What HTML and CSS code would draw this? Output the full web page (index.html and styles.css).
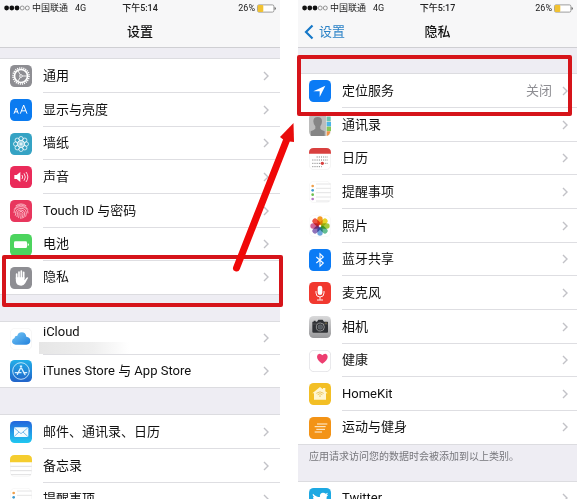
FILE: index.html
```
<!DOCTYPE html>
<html lang="zh-CN">
<head>
  <meta charset="UTF-8">
  <meta name="viewport" content="width=device-width, initial-scale=1.0">
  <title>设置 - 隐私</title>
  <link rel="stylesheet" href="styles.css">
</head>
<body>
  <!-- Shared icons -->
  <svg class="sprite">
    <symbol id="chevron" viewBox="0 0 6 10"><path d="M1 1l4 4-4 4" fill="none" stroke="#c2c2c7" stroke-width="1.4"/></symbol>
    <symbol id="signal" viewBox="0 0 26 6">
      <g fill="#111"><circle cx="2.6" cy="3" r="2.4"/><circle cx="7.8" cy="3" r="2.4"/><circle cx="13" cy="3" r="2.4"/></g>
      <g fill="none" stroke="#555" stroke-width=".6"><circle cx="18.2" cy="3" r="2"/><circle cx="23.3" cy="3" r="2"/></g>
    </symbol>
    <symbol id="battery" viewBox="0 0 19 9">
      <rect x=".5" y=".9" width="16.4" height="7.2" rx="1.5" fill="#fff" stroke="#777" stroke-width=".7"/>
      <rect x=".7" y="1.1" width="5.6" height="6.8" rx="1" fill="#f1c232"/>
      <path d="M17.6 3.1q1.2.3 1.2 1.4t-1.2 1.4z" fill="#555"/>
    </symbol>
    <symbol id="reminders" viewBox="0 0 66 66">
      <rect x="1" y="1" width="64" height="64" rx="14" fill="#fff" stroke="#eee" stroke-width="1.5"/>
      <path d="M21 9h44M21 22h44M21 35h44M21 48h44M21 60h40" stroke="#d6d6d8" stroke-width="2"/>
      <circle cx="11" cy="15" r="4" fill="#f0a04b"/><circle cx="11" cy="28" r="4" fill="#3f9bd0"/>
      <circle cx="11" cy="41" r="4" fill="#6cc04f"/><circle cx="11" cy="54" r="4" fill="#b57bc4"/>
    </symbol>
  </svg>

  <div class="stage">
    <section class="phone">
      <header class="top">
        <div class="status">
          <div class="carrier"><svg class="signal"><use href="#signal"/></svg><span>中国联通</span><span class="net">4G</span></div>
          <div class="time">下午5:14</div>
          <div class="power">26%<svg class="battery"><use href="#battery"/></svg></div>
        </div>
        <div class="nav"><h1>设置</h1></div>
      </header>

      <ul class="group first">
        <li><a class="row" href="#">
          <svg class="icon" viewBox="0 0 66 66"><rect width="66" height="66" rx="14" fill="#8e8e93"/>
            <g fill="none" stroke="#fff"><circle cx="33" cy="33" r="24" stroke-width="5" stroke-dasharray="3.4 2.88"/><circle cx="33" cy="33" r="19.5" stroke-width="5"/><circle cx="33" cy="33" r="4" stroke-width="2.5"/><path d="M37 33h14M31 29.500l-7-12M31 36.500l-7 12" stroke-width="2.5"/></g></svg>
          <span class="body"><span class="label">通用</span><svg class="chevron"><use href="#chevron"/></svg></span></a></li>
        <li><a class="row" href="#">
          <svg class="icon" viewBox="0 0 66 66"><rect width="66" height="66" rx="14" fill="#0b7bf0"/>
            <path d="M12 44l6.500-17 6.500 17M14.500 38.500h8M31 44l10-26 10 26M34.500 35.500h13" fill="none" stroke="#fff" stroke-width="3"/></svg>
          <span class="body"><span class="label">显示与亮度</span><svg class="chevron"><use href="#chevron"/></svg></span></a></li>
        <li><a class="row" href="#">
          <svg class="icon" viewBox="0 0 66 66"><rect width="66" height="66" rx="14" fill="#35a3c4"/>
            <g fill="none" stroke="#fff" stroke-width="2.2"><circle cx="33" cy="17" r="6.500"/><circle cx="44.300" cy="21.700" r="6.500"/><circle cx="49" cy="33" r="6.500"/><circle cx="44.300" cy="44.300" r="6.500"/><circle cx="33" cy="49" r="6.500"/><circle cx="21.700" cy="44.300" r="6.500"/><circle cx="17" cy="33" r="6.500"/><circle cx="21.700" cy="21.700" r="6.500"/><circle cx="33" cy="33" r="10"/><circle cx="33" cy="33" r="4"/><path d="M33 20v26M20 33h26M24 24l18 18M42 24L24 42" stroke-width="1.500"/></g></svg>
          <span class="body"><span class="label">墙纸</span><svg class="chevron"><use href="#chevron"/></svg></span></a></li>
        <li><a class="row" href="#">
          <svg class="icon" viewBox="0 0 66 66"><rect width="66" height="66" rx="14" fill="#ea2b5a"/>
            <path d="M13 27h7l11-9v30l-11-9h-7z" fill="#fff"/>
            <path d="M36 27q4 6 0 12M42 22q8 11 0 22M48 18q11 15 0 30" fill="none" stroke="#fff" stroke-width="2.500"/></svg>
          <span class="body"><span class="label">声音</span><svg class="chevron"><use href="#chevron"/></svg></span></a></li>
        <li><a class="row" href="#">
          <svg class="icon" viewBox="0 0 66 66"><rect width="66" height="66" rx="14" fill="#e8365d"/>
            <g fill="none" stroke="#ffd9df" stroke-width="2.200" stroke-linecap="round"><path d="M18 17q15-11 30 0M13 27q8-12 20-12t20 12M12 38q0-18 21-18t21 19M16 46q2-4 1-10 2-11 16-11t16 13q0 6-2 11M21 50q2-7 1-13 2-7 11-7t11 9q0 8-3 14M26 53q2-8 1-15 2-4 6-4t6 6q0 8-3 15M32 55q2-8 1-16"/></g></svg>
          <span class="body"><span class="label">Touch ID 与密码</span><svg class="chevron"><use href="#chevron"/></svg></span></a></li>
        <li><a class="row" href="#">
          <svg class="icon" viewBox="0 0 66 66"><rect width="66" height="66" rx="14" fill="#4cd45e"/>
            <rect x="12" y="22" width="39" height="20" rx="4" fill="#fff"/><path d="M53 28q4 1 4 4t-4 4z" fill="#fff"/></svg>
          <span class="body"><span class="label">电池</span><svg class="chevron"><use href="#chevron"/></svg></span></a></li>
        <li class="marked"><a class="row" href="#">
          <svg class="icon" viewBox="0 0 66 66"><rect width="66" height="66" rx="14" fill="#8e8e93"/>
            <path d="M20 35V21M27 33V15M34 33V12M41 34V16" stroke="#fff" stroke-width="5" stroke-linecap="round"/>
            <path d="M17.500 31h26v9l6-8q3-3 5 0l-9 17q-4 7-12 7-15 0-16-14z" fill="#fff"/></svg>
          <span class="body"><span class="label">隐私</span><svg class="chevron"><use href="#chevron"/></svg></span></a>
          <span class="mark mark-from"></span></li>
      </ul>

      <ul class="group account">
        <li><a class="row" href="#">
          <svg class="icon" viewBox="0 0 66 66">
            <defs><linearGradient id="cloud" x1="0" y1="0" x2="1" y2="1"><stop offset="0" stop-color="#74c6f5"/><stop offset="1" stop-color="#2381dc"/></linearGradient></defs>
            <rect x="1" y="1" width="64" height="64" rx="14" fill="#fff" stroke="#ececec" stroke-width="1.500"/>
            <path d="M17 50Q6 49 6 40q0-8 8-10 0-7 8-7 3-10 13-10 12 0 14 13 12 2 12 12T49 50z" fill="url(#cloud)"/></svg>
          <span class="body"><span class="label id-label">iCloud<span class="redacted"></span></span><svg class="chevron"><use href="#chevron"/></svg></span></a></li>
        <li><a class="row" href="#">
          <svg class="icon" viewBox="0 0 66 66">
            <defs><linearGradient id="store" x1="0" y1="0" x2="0" y2="1"><stop offset="0" stop-color="#21aee8"/><stop offset="1" stop-color="#2163c9"/></linearGradient></defs>
            <rect width="66" height="66" rx="14" fill="url(#store)"/>
            <g fill="none" stroke="#d9f0ff" stroke-linecap="round"><circle cx="33" cy="33" r="25" stroke-width="2.500"/><path d="M35 18L22 43M31 18l14 26M16 38h17M41 38h9" stroke-width="4"/></g></svg>
          <span class="body"><span class="label">iTunes Store 与 App Store</span><svg class="chevron"><use href="#chevron"/></svg></span></a></li>
      </ul>

      <ul class="group">
        <li><a class="row" href="#">
          <svg class="icon" viewBox="0 0 66 66">
            <defs><linearGradient id="mail" x1="0" y1="0" x2="0" y2="1"><stop offset="0" stop-color="#2466dc"/><stop offset="1" stop-color="#20c8f0"/></linearGradient></defs>
            <rect width="66" height="66" rx="14" fill="url(#mail)"/>
            <rect x="12" y="19" width="43" height="29" rx="3" fill="#f3fbff"/><path d="M13 21l20 17 20-17M13 46l14-13M53 46L39 33" fill="none" stroke="#3b9be0" stroke-width="2"/></svg>
          <span class="body"><span class="label">邮件、通讯录、日历</span><svg class="chevron"><use href="#chevron"/></svg></span></a></li>
        <li><a class="row" href="#">
          <svg class="icon" viewBox="0 0 66 66"><rect x="1" y="1" width="64" height="64" rx="14" fill="#fff" stroke="#eee" stroke-width="1.500"/>
            <path d="M0 22v-8Q0 0 14 0h38q14 0 14 14v8z" fill="#f5cd2f"/><path d="M1 34h64M1 47h64M3 59h60" stroke="#d8d8da" stroke-width="2.500"/></svg>
          <span class="body"><span class="label">备忘录</span><svg class="chevron"><use href="#chevron"/></svg></span></a></li>
        <li><a class="row" href="#">
          <svg class="icon"><use href="#reminders"/></svg>
          <span class="body"><span class="label">提醒事项</span><svg class="chevron"><use href="#chevron"/></svg></span></a></li>
      </ul>
    </section>

    <section class="phone privacy">
      <header class="top">
        <div class="status">
          <div class="carrier"><svg class="signal"><use href="#signal"/></svg><span>中国联通</span><span class="net">4G</span></div>
          <div class="time">下午5:17</div>
          <div class="power">26%<svg class="battery"><use href="#battery"/></svg></div>
        </div>
        <div class="nav">
          <a class="back" href="#"><svg viewBox="0 0 10 16"><path d="M8.500 1.500L2 8l6.500 6.500" fill="none" stroke="#1678c8" stroke-width="2.200"/></svg>设置</a>
          <h1>隐私</h1>
        </div>
      </header>

      <ul class="group first">
        <li class="marked"><a class="row" href="#">
          <svg class="icon" viewBox="0 0 66 66"><rect width="66" height="66" rx="14" fill="#0b7bf5"/><path d="M49 17L13 34h19v17z" fill="#fff"/></svg>
          <span class="body"><span class="label">定位服务</span><span class="value">关闭</span><svg class="chevron"><use href="#chevron"/></svg></span></a>
          <span class="mark mark-to"></span></li>
        <li><a class="row" href="#">
          <svg class="icon" viewBox="0 0 66 66">
            <rect width="66" height="66" rx="14" fill="#e8e8e8"/><path d="M0 14Q0 0 14 0h37v66H14Q0 66 0 52z" fill="#bcbcbc"/>
            <path d="M53 8h12v14H53z" fill="#6cc3ad"/><path d="M53 24h13v13H53z" fill="#4ab5e6"/><path d="M53 38h13v13H53z" fill="#84c75a"/><path d="M53 52h11q-2 12-11 14z" fill="#ef9447"/>
            <path d="M26 9q13 0 13 13 0 8-5 15v7q2 4 13 8v14H5V52q11-4 14-8v-7q-6-7-6-15 0-13 13-13z" fill="#858585"/></svg>
          <span class="body"><span class="label">通讯录</span><svg class="chevron"><use href="#chevron"/></svg></span></a></li>
        <li><a class="row" href="#">
          <svg class="icon" viewBox="0 0 66 66"><rect x="1" y="1" width="64" height="64" rx="14" fill="#fff" stroke="#e8e8e8" stroke-width="1.500"/>
            <path d="M0 17v-3Q0 0 14 0h38q14 0 14 14v3z" fill="#d9403f"/>
            <g stroke="#777" stroke-width="3" stroke-dasharray="3 3.500"><path d="M23 27h34M10 36h47M10 46h47M10 56h28"/></g><circle cx="40" cy="46" r="5" fill="#d9403f"/></svg>
          <span class="body"><span class="label">日历</span><svg class="chevron"><use href="#chevron"/></svg></span></a></li>
        <li><a class="row" href="#">
          <svg class="icon"><use href="#reminders"/></svg>
          <span class="body"><span class="label">提醒事项</span><svg class="chevron"><use href="#chevron"/></svg></span></a></li>
        <li><a class="row" href="#">
          <svg class="icon" viewBox="0 0 66 66"><rect x="1" y="1" width="64" height="64" rx="14" fill="#fff" stroke="#f2f2f2" stroke-width="1.500"/>
            <g class="petals">
              <rect x="25" y="4" width="16" height="26" rx="8" fill="#f59a23"/>
              <rect x="25" y="4" width="16" height="26" rx="8" fill="#e8d52a" transform="rotate(45 33 33)"/>
              <rect x="25" y="4" width="16" height="26" rx="8" fill="#a6cb3c" transform="rotate(90 33 33)"/>
              <rect x="25" y="4" width="16" height="26" rx="8" fill="#62bd92" transform="rotate(135 33 33)"/>
              <rect x="25" y="4" width="16" height="26" rx="8" fill="#6ca5dc" transform="rotate(180 33 33)"/>
              <rect x="25" y="4" width="16" height="26" rx="8" fill="#8f72ba" transform="rotate(225 33 33)"/>
              <rect x="25" y="4" width="16" height="26" rx="8" fill="#cf6597" transform="rotate(270 33 33)"/>
              <rect x="25" y="4" width="16" height="26" rx="8" fill="#ec5343" transform="rotate(315 33 33)"/>
            </g></svg>
          <span class="body"><span class="label">照片</span><svg class="chevron"><use href="#chevron"/></svg></span></a></li>
        <li><a class="row" href="#">
          <svg class="icon" viewBox="0 0 66 66"><rect width="66" height="66" rx="14" fill="#0b7bf5"/>
            <path d="M22 24l21 18-10 10V14l10 10-21 18" fill="none" stroke="#fff" stroke-width="3.200"/></svg>
          <span class="body"><span class="label">蓝牙共享</span><svg class="chevron"><use href="#chevron"/></svg></span></a></li>
        <li><a class="row" href="#">
          <svg class="icon" viewBox="0 0 66 66"><rect width="66" height="66" rx="14" fill="#f1392f"/>
            <rect x="26" y="11" width="14" height="28" rx="7" fill="#fff"/><path d="M21 27v6q0 12 12 12t12-12v-6M33 45v8M24 54h18" fill="none" stroke="#fff" stroke-width="2.800"/></svg>
          <span class="body"><span class="label">麦克风</span><svg class="chevron"><use href="#chevron"/></svg></span></a></li>
        <li><a class="row" href="#">
          <svg class="icon" viewBox="0 0 66 66">
            <defs><linearGradient id="cam" x1="0" y1="0" x2="0" y2="1"><stop offset="0" stop-color="#dadadb"/><stop offset="1" stop-color="#98989a"/></linearGradient></defs>
            <rect width="66" height="66" rx="14" fill="url(#cam)"/>
            <path d="M11 17h3v-3h6v3h4l4-6h13l4 6h10q2 0 2 2v28q0 3-3 3H13q-3 0-3-3V19q0-2 1-2z" fill="#303236"/>
            <path d="M10 24h46" stroke="#777" stroke-width="1.500"/><circle cx="34" cy="33" r="12" fill="#303236" stroke="#bbb" stroke-width="2"/><circle cx="34" cy="33" r="7" fill="#555b61" stroke="#999"/><circle cx="51" cy="21" r="1.500" fill="#f2c84b"/></svg>
          <span class="body"><span class="label">相机</span><svg class="chevron"><use href="#chevron"/></svg></span></a></li>
        <li><a class="row" href="#">
          <svg class="icon" viewBox="0 0 66 66"><rect x="1" y="1" width="64" height="64" rx="14" fill="#fff" stroke="#d8d8dc" stroke-width="2"/>
            <path d="M40 41Q24 31 24 20q0-8 7-9 6 0 9 5 3-5 9-5 7 1 7 9 0 11-16 21z" fill="#ed3e70"/></svg>
          <span class="body"><span class="label">健康</span><svg class="chevron"><use href="#chevron"/></svg></span></a></li>
        <li><a class="row" href="#">
          <svg class="icon" viewBox="0 0 66 66"><rect width="66" height="66" rx="14" fill="#f3bf25"/>
            <path d="M33 12l9 7v-4h7v10l7 6h-5v19H15V31h-5z" fill="#fff6d2"/><path d="M22 31q11-9 22 0M26 35q7-6 14 0M30 40q3-3 6 0" fill="none" stroke="#e4bd4f" stroke-width="2.500"/></svg>
          <span class="body"><span class="label">HomeKit</span><svg class="chevron"><use href="#chevron"/></svg></span></a></li>
        <li><a class="row" href="#">
          <svg class="icon" viewBox="0 0 66 66"><rect width="66" height="66" rx="14" fill="#f39316"/>
            <path d="M24 21h31M17 29h33M22 37h26M17 45h22" stroke="#fff3df" stroke-width="3"/></svg>
          <span class="body"><span class="label">运动与健身</span><svg class="chevron"><use href="#chevron"/></svg></span></a></li>
      </ul>
      <p class="note">应用请求访问您的数据时会被添加到以上类别。</p>

      <ul class="group after-note">
        <li><a class="row" href="#">
          <svg class="icon" viewBox="0 0 66 66"><rect width="66" height="66" rx="14" fill="#1da8e2"/>
            <path d="M12 17q9 10 21 10-2-12 9-13 5 0 8 3l7-3-4 7 5-1-5 6q0 27-27 28-9 0-16-5 9 0 14-4-7-1-9-7h5q-8-3-8-11l4 1q-7-5-4-11z" fill="#fff"/></svg>
          <span class="body"><span class="label">Twitter</span><svg class="chevron"><use href="#chevron"/></svg></span></a></li>
      </ul>
    </section>

    <svg class="arrow" viewBox="0 0 64 152"><path d="M5.500 148L56 19" stroke="#f00808" stroke-width="7" stroke-linecap="round"/><path d="M62.500 3L49 17l5 4 9 1z" fill="#e80c0c"/></svg>
  </div>
</body>
</html>
```
FILE: styles.css
```
* {
  margin: 0; padding: 0; box-sizing: border-box;
}
body {
  font-family: Roboto, "Noto Sans CJK SC", sans-serif;
  font-size: 13px;
  color: #111;
  background: #fff;
  height: 100vh;
  overflow: hidden;
}
a { color: inherit; text-decoration: none; }
ul { list-style: none; }
.sprite { display: none; }

.stage {
  position: relative;
  display: grid;
  grid-template-columns: 280fr 279fr;
  gap: 18px;
  min-height: 100vh;
}
.phone {
  background: #eeedf3;
  min-width: 0;
}

/* status bar + title */
.top {
  background: #f7f7f8;
  border-bottom: 1px solid #cfcfd3;
}
.status {
  display: grid;
  grid-template-columns: 1fr auto 1fr;
  align-items: center;
  height: 16px;
  padding: 0 4px;
  font-size: 9px;
  line-height: 16px;
  color: #222;
}
.carrier {
  display: flex;
  align-items: center;
  gap: 2px;
}
.signal { width: 26px; height: 6px; }
.net { margin-left: 5px; }
.time { font-weight: 500; }
.power {
  display: flex;
  justify-content: flex-end;
  align-items: center;
  gap: 2px;
}
.battery { width: 19px; height: 9px; }
.nav {
  display: grid;
  grid-template-columns: 1fr auto 1fr;
  align-items: center;
  height: 31px;
  padding: 0 6px;
}
.nav h1 {
  grid-column: 2;
  font-size: 13px;
  font-weight: 500;
  line-height: 20px;
}
.back {
  display: flex;
  align-items: center;
  gap: 5px;
  line-height: 20px;
  color: #2b82c6;
}
.back svg { width: 10px; height: 16px; }

/* lists */
.group {
  margin-top: 26px;
  background: #fff;
  border-top: 1px solid #dcdce0;
}
.group.first { margin-top: 10px; }
.privacy .group.first { margin-top: 25px; }
.group.after-note { margin-top: 0; }
.row {
  display: flex;
  align-items: center;
  gap: 11px;
  height: 34px;
  padding-left: 10px;
}
.group li:nth-child(3n) .row,
.account .row { height: 33px; }
.privacy .row { padding-left: 11px; }
.icon {
  flex: none;
  width: 22px;
  height: 22px;
}
.body {
  flex: 1;
  display: flex;
  align-items: center;
  gap: 10px;
  height: 100%;
  padding-right: 11px;
  border-bottom: 1px solid #dedee2;
}
.privacy .body { padding-right: 9px; }
.group li:last-child .body { border-bottom-color: transparent; }
.group li:last-child .row { border-bottom: 1px solid #dcdce0; }
.label {
  flex: 1;
  line-height: 20px;
  white-space: nowrap;
}
.value { color: #8e8e93; line-height: 20px; }
.chevron { width: 6px; height: 10px; }
.petals rect { mix-blend-mode: multiply; }

/* account name is smudged out */
.id-label {
  display: flex;
  flex-direction: column;
}
.redacted {
  width: 90px;
  height: 12px;
  margin-left: -4px;
  background: linear-gradient(90deg, #e6e6e6, #efefef 60%, #fff);
}

.note {
  height: 36px;
  padding-left: 11px;
  font-size: 10px;
  line-height: 24px;
  color: #77777c;
}

/* red tutorial marks */
.marked { position: relative; }
.mark {
  position: absolute;
  border: 4px solid #d6141a;
  border-radius: 2px;
  z-index: 1;
  pointer-events: none;
}
.mark-from { top: -6px; bottom: -12px; left: 2px; right: -3px; }
.mark-to { top: -19px; bottom: -8px; left: -1px; right: 5px; }
.arrow {
  position: absolute;
  top: 120px;
  left: calc(50% - 58px);
  width: 64px;
  height: 152px;
  z-index: 2;
  pointer-events: none;
}
```
